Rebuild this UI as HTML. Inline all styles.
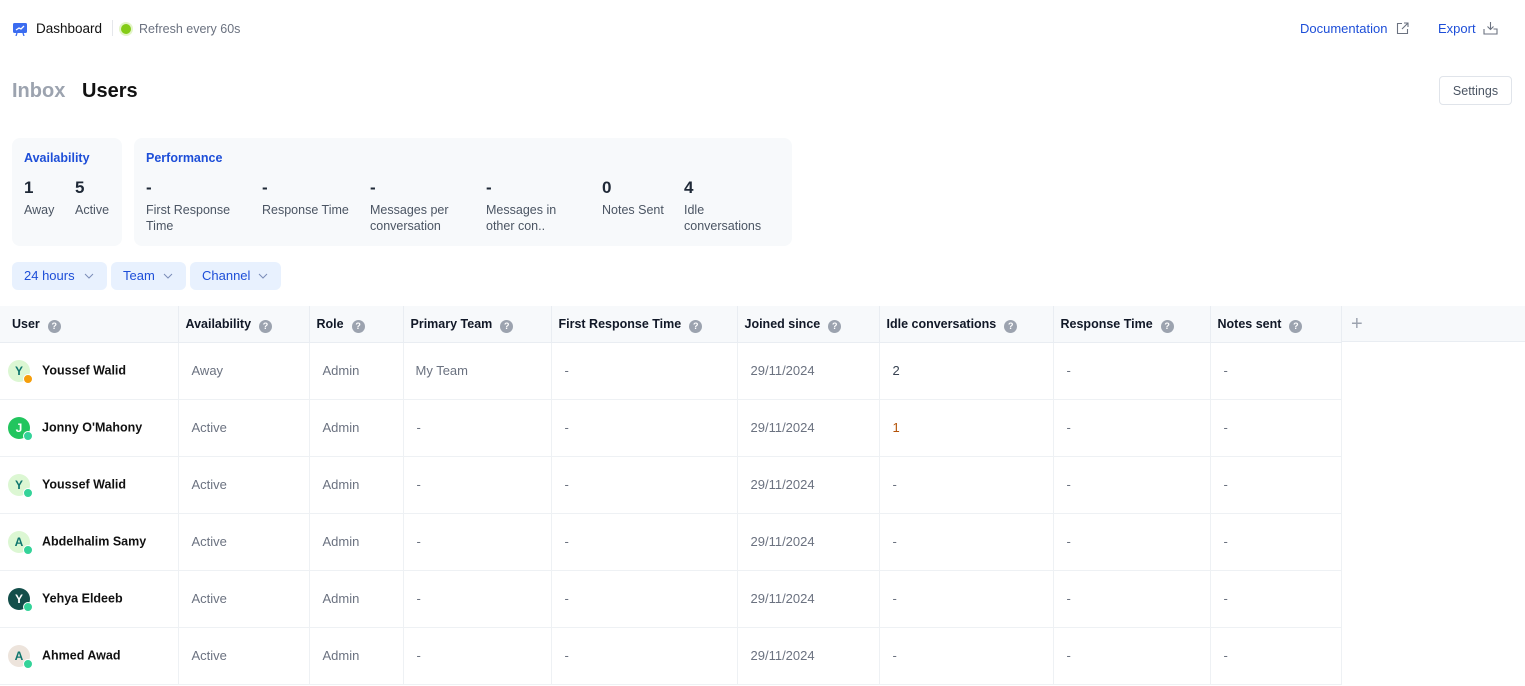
<!DOCTYPE html>
<html><head><meta charset="utf-8"><style>
*{box-sizing:border-box;margin:0;padding:0}
body{width:1525px;height:686px;overflow:hidden;background:#fff;font-family:"Liberation Sans",sans-serif;color:#111827;font-size:13px;position:relative}
.abs{position:absolute}
.blue{color:#1d4ed8}
.card{position:absolute;background:#f7f9fb;border-radius:8px;top:138px;height:108px}
.ct{position:absolute;top:13px;font-weight:bold;font-size:12.5px;color:#1d4ed8}
.num{position:absolute;top:40px;font-size:17px;font-weight:bold;color:#1f2937}
.lbl{position:absolute;top:64px;font-size:12.5px;color:#4b5563;line-height:16px}
.pill{position:absolute;top:262px;height:28px;background:#e8f1fe;border-radius:6px;color:#1d4ed8;font-size:13px;line-height:28px;padding-left:12px}
.pill svg{position:absolute;top:11px}
table{position:absolute;top:306px;left:0;border-collapse:collapse;table-layout:fixed}
th{height:36px;background:#f7f9fb;text-align:left;font-weight:bold;font-size:12.5px;color:#111827;padding-left:12px;border-right:1px solid #e9edf2;border-bottom:1px solid #e9edf2;white-space:nowrap}
td{height:57px;border-right:1px solid #eef1f4;border-bottom:1px solid #eef1f4;padding-left:13px;color:#6b7280;font-size:13px}
.q{display:inline-block;width:13px;height:13px;border-radius:50%;background:#9ca3af;color:#fff;font-size:9px;text-align:center;line-height:13px;margin-left:8px;vertical-align:-1px}
.u{padding-left:8px;color:#111;font-weight:bold;font-size:12.5px}
.av{display:inline-block;width:22px;height:22px;border-radius:50%;position:relative;vertical-align:middle;margin-right:12px;text-align:center;line-height:22px;font-weight:bold;font-size:12px}
.av i{position:absolute;right:-3px;bottom:-2px;width:10px;height:10px;border-radius:50%;border:1.5px solid #fff;background:#34d399}
</style></head><body>
<svg class="abs" style="left:13px;top:22px" width="14" height="14" viewBox="0 0 14 14"><rect x="0" y="1" width="14" height="10" rx="1.5" fill="#3b6cf0"/><path d="M3 8l3-2 2 1 3-3" stroke="#fff" stroke-width="1.3" fill="none"/><path d="M4 11l-1 3M10 11l1 3" stroke="#3b6cf0" stroke-width="1.3"/></svg>
<div class="abs" style="left:36px;top:21px;font-size:13.5px;color:#111">Dashboard</div>
<div class="abs" style="left:112px;top:20px;width:1px;height:16px;background:#e5e7eb"></div>
<div class="abs" style="left:121px;top:24px;width:10px;height:10px;border-radius:50%;background:#84cc16;box-shadow:0 0 0 2px #e3f5c8"></div>
<div class="abs" style="left:139px;top:22px;font-size:12.5px;color:#6b7280">Refresh every 60s</div>
<div class="abs blue" style="left:1300px;top:21px;font-size:13px">Documentation</div>
<svg class="abs" style="left:1396px;top:22px" width="13" height="13" viewBox="0 0 13 13" fill="none" stroke="#6b7280" stroke-width="1.1"><path d="M6 1.5H1.5v10h10V7M8 1h4v4M12 1L6 7"/></svg>
<div class="abs blue" style="left:1438px;top:21px;font-size:13px">Export</div>
<svg class="abs" style="left:1483px;top:21px" width="15" height="14" viewBox="0 0 15 14" fill="none" stroke="#6b7280" stroke-width="1.1"><path d="M7.5 1v7M4.5 5.5l3 3 3-3M1 8v5h13V8H10.5"/></svg>
<div class="abs" style="left:12px;top:80px;font-size:20px;font-weight:bold;color:#9ca3af">Inbox</div>
<div class="abs" style="left:82px;top:80px;font-size:20px;font-weight:bold;color:#111">Users</div>
<div class="abs" style="left:1439px;top:76px;width:73px;height:29px;border:1px solid #e0e4ea;border-radius:4px;font-size:12.5px;color:#4b5563;text-align:center;line-height:28px">Settings</div>

<div class="card" style="left:12px;width:110px">
<div class="ct" style="left:12px">Availability</div>
<div class="num" style="left:12px">1</div><div class="lbl" style="left:12px">Away</div>
<div class="num" style="left:63px">5</div><div class="lbl" style="left:63px">Active</div>
</div>
<div class="card" style="left:134px;width:658px">
<div class="ct" style="left:12px">Performance</div>
<div class="num" style="left:12px">-</div><div class="lbl" style="left:12px">First Response<br>Time</div>
<div class="num" style="left:128px">-</div><div class="lbl" style="left:128px">Response Time</div>
<div class="num" style="left:236px">-</div><div class="lbl" style="left:236px">Messages per<br>conversation</div>
<div class="num" style="left:352px">-</div><div class="lbl" style="left:352px">Messages in<br>other con..</div>
<div class="num" style="left:468px">0</div><div class="lbl" style="left:468px">Notes Sent</div>
<div class="num" style="left:550px">4</div><div class="lbl" style="left:550px">Idle<br>conversations</div>
</div>

<div class="pill" style="left:12px;width:95px">24 hours<svg style="left:72px" width="10" height="6" viewBox="0 0 10 6"><path d="M1 1l4 4 4-4" stroke="#7b8db8" fill="none"/></svg></div>
<div class="pill" style="left:111px;width:75px">Team<svg style="left:52px" width="10" height="6" viewBox="0 0 10 6"><path d="M1 1l4 4 4-4" stroke="#7b8db8" fill="none"/></svg></div>
<div class="pill" style="left:190px;width:91px">Channel<svg style="left:68px" width="10" height="6" viewBox="0 0 10 6"><path d="M1 1l4 4 4-4" stroke="#7b8db8" fill="none"/></svg></div>

<div class="abs" style="left:0;top:306px;width:1525px;height:36px;background:#f7f9fb;border-bottom:1px solid #e9edf2"></div>
<div class="abs" style="left:1351px;top:313px;font-size:20px;color:#9ca3af;font-weight:300">+</div>
<table>
<colgroup><col style="width:178px"><col style="width:131px"><col style="width:94px"><col style="width:148px"><col style="width:186px"><col style="width:142px"><col style="width:174px"><col style="width:157px"><col style="width:131px"></colgroup>
<tr style="height:36px"><th style="height:36px;padding-top:2px">User<span class="q">?</span></th><th style="padding-left:7px;padding-top:2px">Availability<span class="q">?</span></th><th style="padding-left:7px;padding-top:2px">Role<span class="q">?</span></th><th style="padding-left:7px;padding-top:2px">Primary Team<span class="q">?</span></th><th style="padding-left:7px;padding-top:2px">First Response Time<span class="q">?</span></th><th style="padding-left:7px;padding-top:2px">Joined since<span class="q">?</span></th><th style="padding-left:7px;padding-top:2px">Idle conversations<span class="q">?</span></th><th style="padding-left:7px;padding-top:2px">Response Time<span class="q">?</span></th><th style="padding-left:7px;padding-top:2px">Notes sent<span class="q">?</span></th></tr>
<tr><td class="u"><span class="av" style="background:#dcf7d3;color:#0f766e">Y<i style="background:#f59e0b"></i></span>Youssef Walid</td><td>Away</td><td>Admin</td><td style="padding-left:12px">My Team</td><td>-</td><td>29/11/2024</td><td style="color:#374151">2</td><td>-</td><td>-</td></tr>
<tr><td class="u"><span class="av" style="background:#22c55e;color:#fff">J<i></i></span>Jonny O'Mahony</td><td>Active</td><td>Admin</td><td>-</td><td>-</td><td>29/11/2024</td><td style="color:#b45309">1</td><td>-</td><td>-</td></tr>
<tr><td class="u"><span class="av" style="background:#dcf7d3;color:#0f766e">Y<i></i></span>Youssef Walid</td><td>Active</td><td>Admin</td><td>-</td><td>-</td><td>29/11/2024</td><td>-</td><td>-</td><td>-</td></tr>
<tr><td class="u"><span class="av" style="background:#dcf7d3;color:#0f766e">A<i></i></span>Abdelhalim Samy</td><td>Active</td><td>Admin</td><td>-</td><td>-</td><td>29/11/2024</td><td>-</td><td>-</td><td>-</td></tr>
<tr><td class="u"><span class="av" style="background:#134e4a;color:#fff">Y<i></i></span>Yehya Eldeeb</td><td>Active</td><td>Admin</td><td>-</td><td>-</td><td>29/11/2024</td><td>-</td><td>-</td><td>-</td></tr>
<tr><td class="u"><span class="av" style="background:#ede4dc;color:#0f766e">A<i></i></span>Ahmed Awad</td><td>Active</td><td>Admin</td><td>-</td><td>-</td><td>29/11/2024</td><td>-</td><td>-</td><td>-</td></tr>
</table>
</body></html>
